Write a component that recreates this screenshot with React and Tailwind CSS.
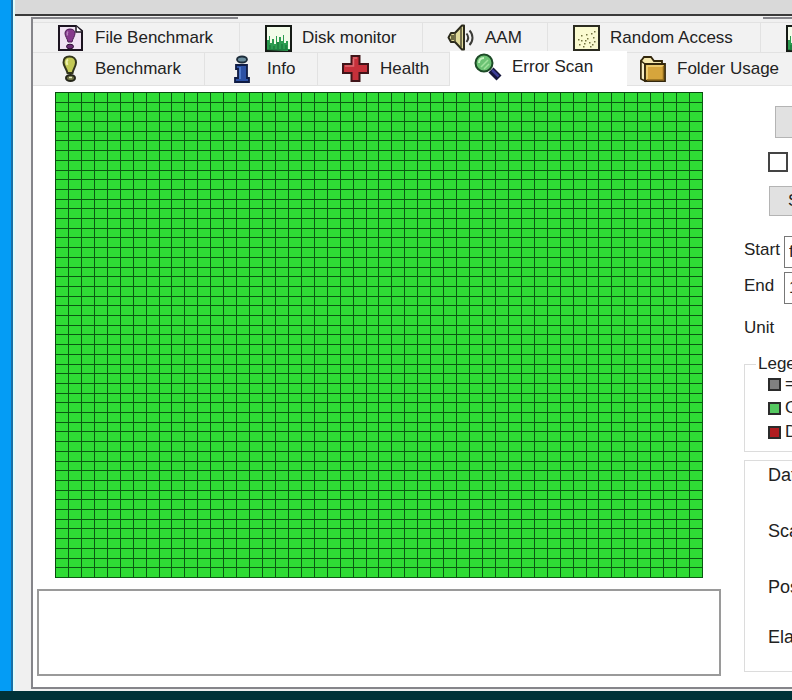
import React from "react";

const iconClass = "w-7 h-7 shrink-0";

const FileBenchmarkIcon = () => (
  <svg viewBox="0 0 28 28" className={iconClass}>
    <path d="M2 2h17l6 5v19H2z" fill="#f0e2f3" stroke="#1c1420" strokeWidth="2" />
    <path d="M19 2v6h6" fill="#fff" stroke="#1c1420" strokeWidth="1.500" />
    <path d="M13 5c3.500 0 5 2 5 4.500S15.500 15 15 18h-4c-.5-3-3-6-3-8.500S9.500 5 13 5z" fill="#86388c" stroke="#4b1a52" />
    <path d="M11 7.500c-1 1-1 2.500-.5 4" fill="none" stroke="#b883bf" strokeWidth="1.500" />
    <ellipse cx="13" cy="22.500" rx="3.500" ry="2.300" fill="#6b2a74" stroke="#2d0c33" />
  </svg>
);

const BenchmarkIcon = () => (
  <svg viewBox="0 0 28 28" className={iconClass}>
    <path d="M12.500 1.500c4 0 6.500 2.500 6.500 6s-2.500 6-3.500 10.500h-5C9.500 13.500 6.500 11 6.500 7.500s2-6 6-6z" fill="#c3c956" stroke="#33361c" strokeWidth="2" />
    <path d="M11 4.500c-1.500 1-1.500 3.500-.5 5.500" fill="none" stroke="#eef2ac" strokeWidth="2" />
    <ellipse cx="13.500" cy="23" rx="4.500" ry="3" fill="#6f7344" stroke="#25261a" strokeWidth="2" />
    <path d="M12 22.500h3" stroke="#e6e8c0" strokeWidth="1.500" />
  </svg>
);

const MonitorIcon = () => (
  <svg viewBox="0 0 28 28" className={iconClass}>
    <rect x="2" y="2" width="25" height="25" fill="#f2fbe9" stroke="#151a15" strokeWidth="2" />
    <path d="M3 26V16h2v-4h1v7h2v-4h2v5h2v-8h1v6h2v-5h2v4h2v-6h1v8h2v-2h2v10z" fill="#2c9c50" />
    <path d="M6 26v-5M10 26v-4M14 26v-8M18 26v-6M22 26v-5" stroke="#146a32" />
    <path d="M3 25.500h23" stroke="#1e8040" />
  </svg>
);

const SpeakerIcon = () => (
  <svg viewBox="0 0 28 28" className={iconClass}>
    <path d="M4 9h4l7-7.500h2v24h-2L8 18H4L1.500 13.500z" fill="#e0da9a" stroke="#2b2a1c" strokeWidth="2" strokeLinejoin="round" />
    <path d="M8 9v9M14 4v19" stroke="#4e4b30" strokeWidth="1.500" />
    <path d="M4 11h3v5H4z" fill="#6d6a40" />
    <path d="M19.500 9.500c2 2.500 2 6 0 8.500M22.500 6.500c4 4 4 10.500 0 14.500" fill="none" stroke="#3c3c38" strokeWidth="2" />
  </svg>
);

const dots = [
  [7, 20], [9, 16], [6, 15], [12, 19], [11, 22], [15, 14], [17, 18], [14, 10],
  [19, 9], [21, 13], [20, 20], [9, 11], [22, 7], [18, 22], [13, 16], [22, 17],
];

const RandomIcon = () => (
  <svg viewBox="0 0 28 28" className={iconClass}>
    <rect x="2" y="2" width="25" height="24" fill="#fafad0" stroke="#2c2c20" strokeWidth="2" />
    {dots.map(([x, y]) => (
      <rect key={`${x}-${y}`} x={x} y={y} width="1.500" height="1.500" fill="#71713c" />
    ))}
  </svg>
);

const InfoIcon = () => (
  <svg viewBox="0 0 28 28" className={iconClass}>
    <ellipse cx="13" cy="4.500" rx="5" ry="3" fill="#6a8c9c" stroke="#1d2c3a" strokeWidth="1.800" />
    <path d="M7 10h11v13h2v4H6v-4h3v-9H7z" fill="#2d51a4" stroke="#101c44" strokeWidth="1.800" />
    <path d="M11 12v12" stroke="#5d86d6" strokeWidth="1.500" />
  </svg>
);

const HealthIcon = () => (
  <svg viewBox="0 0 28 28" className={iconClass}>
    <path d="M9.500 1h8v8h8.500v9h-8.500v8h-8v-8H1V9h8.500z" fill="#c6303a" stroke="#401418" strokeWidth="2" />
    <path d="M11 3h4M3 11h8.500V4" fill="none" stroke="#dc6a70" strokeWidth="1.500" />
  </svg>
);

const ScanIcon = () => (
  <svg viewBox="0 0 28 28" className={iconClass}>
    <path d="M17 17l8 8" stroke="#15153a" strokeWidth="7" />
    <path d="M18 17l6.500 6.500" stroke="#3d3d96" strokeWidth="2.500" />
    <circle cx="10" cy="10" r="8.500" fill="#6cc274" stroke="#1c4a26" strokeWidth="2" />
    <path d="M5 10c0-3 2-5 5-5" fill="none" stroke="#c3f2bd" strokeWidth="2" />
    <path d="M7 14l7-7M10 16l5-5" stroke="#a0e29c" strokeWidth="1.500" />
  </svg>
);

const FolderIcon = () => (
  <svg viewBox="0 0 28 28" className={iconClass}>
    <path d="M2 24V6l3-4h7l3 4h8v4" fill="#f5e8ae" stroke="#33270c" strokeWidth="1.800" />
    <path d="M2 24V6l4 3v17z" fill="#f7eec4" stroke="#33270c" strokeWidth="1.500" />
    <path d="M6 9h20v17H6z" fill="#d6a53c" stroke="#33270c" strokeWidth="1.800" />
    <path d="M8 24V11h16" fill="none" stroke="#f3d67c" strokeWidth="1.500" />
    <path d="M24.500 11v14H8" fill="none" stroke="#8f6a1c" strokeWidth="1.500" />
  </svg>
);

const topTabs = [
  { label: "File Benchmark", icon: FileBenchmarkIcon, width: "w-[207px]" },
  { label: "Disk monitor", icon: MonitorIcon, width: "w-[183px]" },
  { label: "AAM", icon: SpeakerIcon, width: "w-[125px]" },
  { label: "Random Access", icon: RandomIcon, width: "w-[213px]" },
  { title: "Extra tests", icon: MonitorIcon, width: "w-[200px]" },
];

const bottomTabs = [
  { label: "Benchmark", icon: BenchmarkIcon, width: "w-[172px]" },
  { label: "Info", icon: InfoIcon, width: "w-[113px]" },
  { label: "Health", icon: HealthIcon, width: "w-[132px]" },
  { label: "Error Scan", icon: ScanIcon, width: "w-[177px]", active: true },
  { label: "Folder Usage", icon: FolderIcon, width: "w-[220px]", tucked: true },
];

const Tab = ({ label, title, icon: Icon, width, active, tucked }) => (
  <button
    type="button"
    role="tab"
    aria-label={title}
    aria-selected={Boolean(active)}
    className={`${width} ${tucked ? "pl-3" : "pl-6"} ${
      active ? "-mt-0.5 pb-1 bg-white" : "bg-[#f2f2f2] border-r border-b border-[#e2e2e2]"
    } flex items-center gap-2.5 shrink-0 whitespace-nowrap`}
  >
    <Icon />
    {label}
  </button>
);

const BLOCKS = Array.from({ length: 2500 });

const legend = [
  { label: "= 419 MB", color: "bg-[#808080]" },
  { label: "OK", color: "bg-[#55c860]" },
  { label: "Damaged", color: "bg-[#b01c20]" },
];

const App = () => {
  return (
    <div className="min-h-screen flex flex-col overflow-hidden bg-[#003238] font-['Liberation_Sans',sans-serif] text-[17px] leading-5 text-[#222]">
      <div className="flex-1 flex min-w-0">
        {/* Desktop */}
        <div className="w-[13px] shrink-0 bg-[#049cf5] border-r-2 border-[#1a6fa5]"></div>

        {/* Window */}
        <div className="flex-1 min-w-0 flex flex-col overflow-hidden bg-[#f0f0f0] border-l-2 border-[#dffcfc]">
          <div className="h-4 shrink-0 bg-[#d9d9d9] border-b-2 border-[#3a3a3a]"></div>

          <div className="flex-1 flex flex-col ml-4 mb-0.5 mt-px border-l-2 border-b-2 border-[#85858a]">
            <div className="flex h-[5px] items-start">
              <div className="w-[205px] h-0.5 bg-[#85858a]"></div>
              <div className="w-[525px] shrink-0"></div>
              <div className="flex-1 h-0.5 bg-[#85858a]"></div>
            </div>

            {/* Tabs */}
            <div role="tablist" aria-label="Tests">
              <div className="flex h-[31px] border-t border-[#e2e2e2]">
                {topTabs.map((tab) => (
                  <Tab key={tab.label || tab.title} {...tab} />
                ))}
              </div>
              <div className="flex h-[33px]">
                {bottomTabs.map((tab) => (
                  <Tab key={tab.label} {...tab} />
                ))}
              </div>
            </div>

            {/* Error scan */}
            <div className="flex-1 flex bg-white">
              <div className="w-[688px] shrink-0 flex flex-col pt-1.5 pl-1">
                <div className="ml-[18px] w-[648px] h-[486px] grid grid-cols-[repeat(50,minmax(0,1fr))] grid-rows-[repeat(50,minmax(0,1fr))] bg-[#2fdc35] border-t border-l border-[#084a0e]">
                  {BLOCKS.map((_, i) => (
                    <div key={i} className="border-r border-b border-[#0a5a12]"></div>
                  ))}
                </div>
                <textarea
                  readOnly
                  aria-label="Scan log"
                  className="block mt-[11px] w-[684px] h-[87px] resize-none bg-white border-2 border-[#9a9a9a] outline-none"
                />
              </div>

              <div className="w-[240px] shrink-0 flex flex-col pl-[23px] pt-5">
                <button type="button" aria-label="Start scan" className="ml-[31px] w-[130px] h-8 bg-[#e1e1e1] border border-[#b4b4b4]"></button>
                <div className="ml-6 mt-3.5 h-5 flex items-center">
                  <input
                    type="checkbox"
                    aria-label="Quick scan"
                    className="appearance-none w-5 h-5 shrink-0 bg-white border-2 border-[#444]"
                  />
                </div>
                <button type="button" className="ml-[25px] mt-3.5 w-[136px] h-[30px] bg-[#e1e1e1] border border-[#b4b4b4] pl-[18px] text-left">
                  Speed map
                </button>
                <div className="mt-5 h-8 flex items-center">
                  <label htmlFor="start" className="w-10 pb-1 shrink-0">Start</label>
                  <input id="start" defaultValue="first" className="w-[100px] h-8 bg-white border border-[#777] px-1" />
                </div>
                <div className="mt-1 h-8 flex items-center">
                  <label htmlFor="end" className="w-10 pb-1 shrink-0">End</label>
                  <input id="end" defaultValue="1000" className="w-[100px] h-8 bg-white border border-[#777] px-1" />
                </div>
                <div className="mt-3.5 h-5">Unit</div>

                <fieldset className="mt-4 w-[180px] h-[98px] border border-[#dcdcdc] pl-[23px] whitespace-nowrap">
                  <legend className="-ml-3 px-0.5">Legend</legend>
                  <ul className="flex flex-col gap-1">
                    {legend.map((item) => (
                      <li key={item.label} className="h-5 flex items-center gap-1">
                        <span className={`w-[13px] h-[13px] shrink-0 border-2 border-[#2b2b2b] ${item.color}`}></span>
                        {item.label}
                      </li>
                    ))}
                  </ul>
                </fieldset>

                <dl className="mt-2 w-[180px] h-[212px] border border-[#dcdcdc] pl-[23px] pt-1 text-[18px] whitespace-nowrap">
                  <dt className="h-14">Data</dt>
                  <dt className="h-14">Scan speed</dt>
                  <dt className="h-[50px]">Position</dt>
                  <dt>Elapsed time</dt>
                </dl>
              </div>
            </div>
          </div>
        </div>
      </div>

      {/* Taskbar */}
      <div className="h-[9px] shrink-0 bg-[#003238]"></div>
    </div>
  );
};

export default App;
